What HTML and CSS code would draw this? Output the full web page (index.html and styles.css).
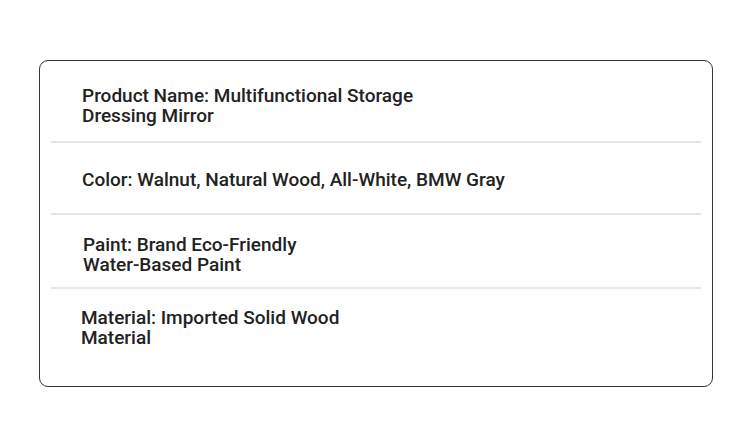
FILE: index.html
```html
<!DOCTYPE html>
<html lang="en">
<head>
<meta charset="utf-8">
<title>Product Specs</title>
<link rel="stylesheet" href="styles.css">
</head>
<body>
<div class="card">
  <div class="row row-1"><p class="spec">Product Name: Multifunctional Storage<br>Dressing Mirror</p></div>
  <div class="row row-2"><p class="spec">Color: Walnut, Natural Wood, All-White, BMW Gray</p></div>
  <div class="row row-3"><p class="spec">Paint: Brand Eco-Friendly<br>Water-Based Paint</p></div>
  <div class="row row-4"><p class="spec">Material: Imported Solid Wood<br>Material</p></div>
</div>
</body>
</html>
```
FILE: styles.css
```css
html, body {
  margin: 0;
  padding: 0;
  background: #ffffff;
}
body {
  width: 750px;
  height: 439px;
  padding-top: 60px;
  box-sizing: border-box;
  font-family: Roboto, "Liberation Sans", sans-serif;
}
.card {
  margin-left: 39px;
  width: 674px;
  height: 327px;
  box-sizing: border-box;
  border: 1px solid #333333;
  border-radius: 9px;
  padding: 0 11px;
  display: flex;
  flex-direction: column;
}
.row {
  border-bottom: 2px solid #e6e6e6;
  box-sizing: border-box;
}
.row-4 {
  border-bottom: none;
  flex: 1;
}
.spec {
  margin: 0;
  padding-left: 31px;
  font-size: 19px;
  font-weight: 500;
  line-height: 20px;
  color: #222222;
}
.row-1 { height: 82px; padding-top: 25px; }
.row-2 { height: 72px; padding-top: 27px; }
.row-3 { height: 74px; padding-top: 20px; }
.row-4 { padding-top: 19px; }
.row-3 .spec { padding-left: 32px; }
.row-4 .spec { padding-left: 30px; }
```
